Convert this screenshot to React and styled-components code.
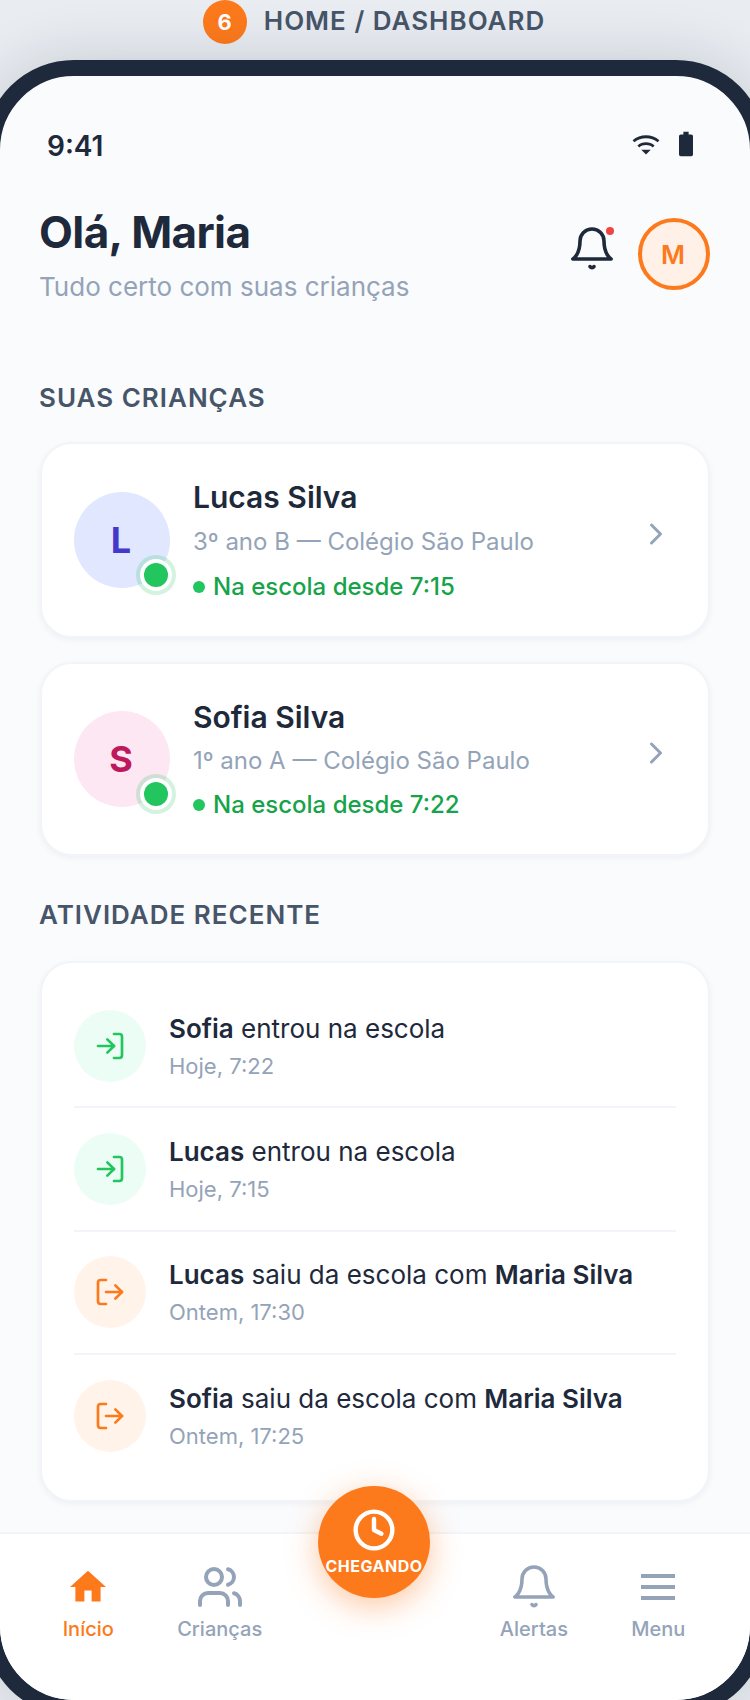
import React from 'react'
import styled, { createGlobalStyle } from 'styled-components'
import { ChevronRight, Clock, LogIn, LogOut, Users } from 'lucide-react'

const ORANGE = '#fd7a1c'

const GlobalStyle = createGlobalStyle`
  html, body {
    margin: 0;
    padding: 0;
  }
  body {
    font-family: Inter, 'Liberation Sans', sans-serif;
    color: #1e293b;
  }
`

const children = [
  { name: 'Lucas Silva', initial: 'L', grade: '3º ano B — Colégio São Paulo', since: 'Na escola desde 7:15', bg: '#e0e7ff', fg: '#4338ca', height: 196, gap: 8 },
  { name: 'Sofia Silva', initial: 'S', grade: '1º ano A — Colégio São Paulo', since: 'Na escola desde 7:22', bg: '#fce7f3', fg: '#be185d', height: 194, gap: 7 },
]

const activity = [
  { who: 'Sofia', text: ' entrou na escola', when: 'Hoje, 7:22', type: 'in' },
  { who: 'Lucas', text: ' entrou na escola', when: 'Hoje, 7:15', type: 'in' },
  { who: 'Lucas', text: ' saiu da escola com ', by: 'Maria Silva', when: 'Ontem, 17:30', type: 'out' },
  { who: 'Sofia', text: ' saiu da escola com ', by: 'Maria Silva', when: 'Ontem, 17:25', type: 'out' },
]

const BellIcon = ({ color }) => (
  <svg width="48" height="48" viewBox="0 0 24 24" fill="none" stroke={color} strokeWidth="1.8" strokeLinecap="round" strokeLinejoin="round">
    <path d="M18 8A6 6 0 0 0 6 8c0 7-3.6 9-3.6 9h19.2s-3.6-2-3.6-9" />
    <path d="M13 20.8a1.2 1.2 0 0 1-2 0" />
  </svg>
)

const HomeIcon = () => (
  <svg width="48" height="48" viewBox="-1.33 -1.33 26.67 26.67" fill={ORANGE}>
    <path d="M10 20v-6h4v6h5v-8h3L12 3 2 12h3v8z" />
  </svg>
)

const MenuIcon = () => (
  <svg width="48" height="48" viewBox="0 0 48 48" fill="none" stroke="#94a3b8" strokeWidth="4">
    <path d="M7 13h34M7 24h34M7 35h34" />
  </svg>
)

const App = () => {
  return (
    <Page>
      <GlobalStyle />
      <ScreenLabel>
        <LabelBadge>6</LabelBadge>
        <LabelText>HOME / DASHBOARD</LabelText>
      </ScreenLabel>
      <Phone>
        <Screen>
          <StatusBar>
            <Time>9:41</Time>
            <StatusIcons>
              <svg width="28" height="21" viewBox="1 2 28 22" fill="#1e293b">
                <path d="M1 8.5C8.5 1.5 21.5 1.5 29 8.5l-1.8 2.2C20.5 5 9.5 5 2.8 10.7z" />
                <path d="M6 14c5-4.6 13-4.6 18 0l-1.9 2.2c-3.9-3.4-10.3-3.4-14.2 0z" />
                <path d="M10 18.6h10L15 23.4z" />
              </svg>
              <svg width="14" height="26" viewBox="0 0 16 28" fill="#1e293b">
                <path d="M5 0h6v3h3a2 2 0 0 1 2 2v21a2 2 0 0 1-2 2H2a2 2 0 0 1-2-2V5a2 2 0 0 1 2-2h3z" />
              </svg>
            </StatusIcons>
          </StatusBar>

          <Content>
            <Header>
              <div>
                <Greeting>Olá, Maria</Greeting>
                <Subtitle>Tudo certo com suas crianças</Subtitle>
              </div>
              <HeaderActions>
                <BellWrap>
                  <BellIcon color="#1e293b" />
                  <BellDot />
                </BellWrap>
                <UserAvatar>M</UserAvatar>
              </HeaderActions>
            </Header>

            <SectionTitle>SUAS CRIANÇAS</SectionTitle>
            <ChildList>
              {children.map((c) => (
                <ChildCard key={c.name} $height={c.height}>
                  <ChildAvatar $bg={c.bg} $fg={c.fg}>
                    {c.initial}
                    <PresenceDot />
                  </ChildAvatar>
                  <ChildInfo $gap={c.gap}>
                    <ChildName>{c.name}</ChildName>
                    <ChildGrade>{c.grade}</ChildGrade>
                    <ChildStatus>{c.since}</ChildStatus>
                  </ChildInfo>
                  <Chevron>
                    <ChevronRight size={36} color="#94a3b8" strokeWidth={2} />
                  </Chevron>
                </ChildCard>
              ))}
            </ChildList>

            <SectionTitle $second>ATIVIDADE RECENTE</SectionTitle>
            <ActivityCard>
              {activity.map((a, idx) => (
                <ActivityRow key={idx}>
                  <ActivityIcon $type={a.type}>
                    {a.type === 'in' ? <LogIn size={32} strokeWidth={2} /> : <LogOut size={32} strokeWidth={2} />}
                  </ActivityIcon>
                  <div>
                    <ActivityText>
                      <b>{a.who}</b>
                      {a.text}
                      {a.by && <b>{a.by}</b>}
                    </ActivityText>
                    <ActivityTime>{a.when}</ActivityTime>
                  </div>
                </ActivityRow>
              ))}
            </ActivityCard>
          </Content>

          <BottomNav>
            <NavItem $active>
              <HomeIcon />
              Início
            </NavItem>
            <NavItem>
              <Users size={48} strokeWidth={2} />
              Crianças
            </NavItem>
            <FabSlot />
            <NavItem>
              <BellIcon color="#94a3b8" />
              Alertas
            </NavItem>
            <NavItem>
              <MenuIcon />
              Menu
            </NavItem>
            <Fab>
              <Clock size={44} strokeWidth={2.4} />
              CHEGANDO
            </Fab>
          </BottomNav>
        </Screen>
      </Phone>
    </Page>
  )
}

const Page = styled.div`
  width: 750px;
  height: 1700px;
  overflow: hidden;
  display: flex;
  flex-direction: column;
  align-items: center;
  background: #e9edf2;
`
const ScreenLabel = styled.div`
  height: 44px;
  margin-bottom: 16px;
  padding-right: 2px;
  flex-shrink: 0;
  display: flex;
  align-items: center;
  gap: 17px;
`
const LabelText = styled.span`
  margin-bottom: 4px;
  font-size: 26px;
  font-weight: 600;
  letter-spacing: 1px;
  color: #475569;
`
const LabelBadge = styled.span`
  width: 44px;
  height: 44px;
  border-radius: 50%;
  background: ${ORANGE};
  color: #fff;
  font-size: 22px;
  font-weight: 700;
  display: flex;
  align-items: center;
  justify-content: center;
`
const Phone = styled.div`
  width: 782px;
  height: 1656px;
  flex-shrink: 0;
  box-sizing: border-box;
  border: 16px solid #1e293b;
  border-radius: 90px;
  overflow: hidden;
  background: #fafbfd;
  box-shadow: 0 0 60px rgba(15, 23, 42, 0.16);
`
const Screen = styled.div`
  height: 100%;
  display: flex;
  flex-direction: column;
`
const StatusBar = styled.div`
  display: flex;
  justify-content: space-between;
  align-items: center;
  height: 40px;
  padding: 50px 57px 0 47px;
`
const Time = styled.span`
  font-size: 28px;
  font-weight: 600;
  color: #1e293b;
`
const StatusIcons = styled.div`
  display: flex;
  align-items: center;
  gap: 19px;
  margin-bottom: 4px;
`
const Content = styled.div`
  flex: 1;
  padding: 0 40px;
`
const Header = styled.div`
  display: flex;
  justify-content: space-between;
  align-items: center;
  margin: 38px 0 0 -1px;
`
const Greeting = styled.h1`
  margin: 0;
  font-size: 44px;
  line-height: 56px;
  font-weight: 700;
  letter-spacing: -0.6px;
  color: #1e293b;
`
const Subtitle = styled.p`
  margin: 10px 0 0;
  font-size: 26px;
  line-height: 34px;
  color: #94a3b8;
`
const HeaderActions = styled.div`
  display: flex;
  align-items: center;
  gap: 22px;
`
const BellWrap = styled.div`
  position: relative;
  display: flex;
  margin-bottom: 10px;
`
const BellDot = styled.span`
  position: absolute;
  top: 2px;
  right: 2px;
  width: 8px;
  height: 8px;
  border-radius: 50%;
  background: #ef4444;
`
const UserAvatar = styled.div`
  width: 72px;
  height: 72px;
  box-sizing: border-box;
  padding-right: 2px;
  border: 4px solid ${ORANGE};
  border-radius: 50%;
  background: #fff1e8;
  color: ${ORANGE};
  font-size: 26px;
  font-weight: 600;
  display: flex;
  align-items: center;
  justify-content: center;
`
const SectionTitle = styled.h2`
  margin: ${(p) => (p.$second ? '42px 0 29px -1px' : '77px 0 27px -1px')};
  font-size: 26px;
  line-height: 34px;
  font-weight: 600;
  letter-spacing: 1px;
  color: #475569;
`
const ChildList = styled.div`
  display: flex;
  flex-direction: column;
  gap: 24px;
`
const ChildCard = styled.div`
  display: flex;
  align-items: center;
  height: ${(p) => p.$height}px;
  box-sizing: border-box;
  padding: 0 34px 0 32px;
  background: #fff;
  border: 2px solid #f1f5f9;
  border-radius: 32px;
  box-shadow: 0 2px 6px rgba(15, 23, 42, 0.05);
`
const ChildAvatar = styled.div`
  position: relative;
  flex-shrink: 0;
  width: 96px;
  height: 96px;
  box-sizing: border-box;
  padding-right: 2px;
  border-radius: 50%;
  background: ${(p) => p.$bg};
  color: ${(p) => p.$fg};
  font-size: 36px;
  font-weight: 700;
  display: flex;
  align-items: center;
  justify-content: center;
`
const PresenceDot = styled.span`
  position: absolute;
  right: 2px;
  bottom: 1px;
  width: 24px;
  height: 24px;
  border-radius: 50%;
  background: #22c55e;
  box-shadow: 0 0 0 4px #fff, 0 0 0 8px rgba(34, 197, 94, 0.2);
`
const ChildInfo = styled.div`
  flex: 1;
  margin-left: 23px;
  display: flex;
  flex-direction: column;
  gap: ${(p) => p.$gap}px;
`
const ChildName = styled.div`
  font-size: 30px;
  line-height: 38px;
  font-weight: 600;
  color: #1e293b;
`
const ChildGrade = styled.div`
  font-size: 24px;
  line-height: 36px;
  color: #94a3b8;
`
const ChildStatus = styled.div`
  margin-top: 3px;
  display: flex;
  align-items: center;
  gap: 8px;
  font-size: 24px;
  line-height: 32px;
  font-weight: 500;
  color: #16a34a;
  &::before {
    content: '';
    width: 12px;
    height: 12px;
    border-radius: 50%;
    background: #22c55e;
  }
`
const Chevron = styled.div`
  display: flex;
  margin-bottom: 13px;
`
const ActivityCard = styled.div`
  padding: 22px 32px 24px;
  background: #fff;
  border: 2px solid #f1f5f9;
  border-radius: 32px;
  box-shadow: 0 2px 6px rgba(15, 23, 42, 0.05);
`
const ActivityRow = styled.div`
  display: flex;
  align-items: center;
  gap: 23px;
  padding: 24.66px 0;
  border-bottom: 2px solid #f1f5f9;
  &:last-child {
    border-bottom: 0;
  }
`
const ActivityIcon = styled.div`
  flex-shrink: 0;
  width: 72px;
  height: 72px;
  border-radius: 50%;
  display: flex;
  align-items: center;
  justify-content: center;
  background: ${(p) => (p.$type === 'in' ? '#ecfdf5' : '#fff3ea')};
  color: ${(p) => (p.$type === 'in' ? '#22c55e' : ORANGE)};
`
const ActivityText = styled.div`
  font-size: 26px;
  line-height: 38px;
  color: #1e293b;
  b {
    font-weight: 600;
  }
`
const ActivityTime = styled.div`
  margin-top: 2px;
  font-size: 22px;
  line-height: 32px;
  color: #94a3b8;
`
const BottomNav = styled.nav`
  position: relative;
  height: 168px;
  box-sizing: border-box;
  flex-shrink: 0;
  padding: 29px 33px 0 31px;
  display: flex;
  justify-content: space-around;
  align-items: flex-start;
  background: #fff;
  border-top: 2px solid #f1f5f9;
`
const NavItem = styled.div`
  display: flex;
  flex-direction: column;
  align-items: center;
  gap: 4px;
  font-size: 20px;
  line-height: 28px;
  font-weight: 500;
  color: ${(p) => (p.$active ? ORANGE : '#94a3b8')};
`
const FabSlot = styled.div`
  width: 111px;
`
const Fab = styled.div`
  position: absolute;
  top: -48px;
  left: calc(50% - 1px);
  transform: translateX(-50%);
  width: 112px;
  height: 112px;
  border-radius: 50%;
  background: ${ORANGE};
  color: #fff;
  box-shadow: 0 8px 32px rgba(249, 115, 22, 0.4);
  display: flex;
  flex-direction: column;
  align-items: center;
  justify-content: center;
  gap: 4px;
  font-size: 16px;
  line-height: 20px;
  font-weight: 700;
  letter-spacing: 0.5px;
`

export default App
